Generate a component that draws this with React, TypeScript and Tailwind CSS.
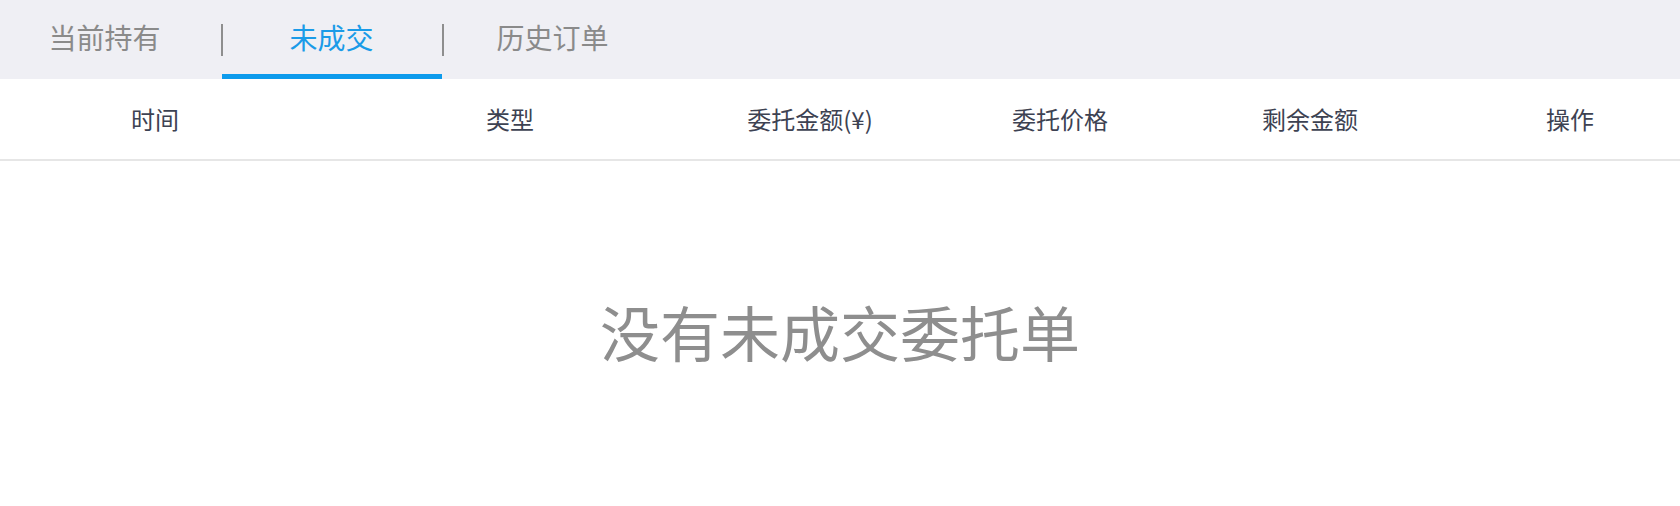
export default function App() {
  const tabs = [
    { label: "当前持有", active: false },
    { label: "未成交", active: true },
    { label: "历史订单", active: false },
  ];

  const columns = [
    { label: "时间", className: "w-[310px]" },
    { label: "类型", className: "w-[400px]" },
    { label: "委托金额(¥)", className: "w-[200px]" },
    { label: "委托价格", className: "w-[300px]" },
    { label: "剩余金额", className: "w-[200px]" },
    { label: "操作", className: "flex-1 pl-[50px]" },
  ];

  return (
    <main
      className="h-[506px] w-full bg-white"
      style={{ fontFamily: '"Noto Sans CJK SC", "Noto Sans", sans-serif' }}
    >
      <nav className="flex h-[79px] items-stretch bg-[#efeff4]">
        {tabs.map((tab, i) => (
          <div
            key={tab.label}
            className={
              i === 0
                ? "flex w-[221px] items-center justify-center pr-[12px]"
                : "flex w-[221px] items-center justify-center"
            }
          >
            <div className="relative flex h-full w-full items-center justify-center">
              {i > 0 && (
                <span className="absolute left-0 top-[24px] h-[32px] w-[2px] bg-[#8e8e8e]" />
              )}
              <span
                className={
                  tab.active
                    ? "pb-[6px] text-[28px] text-[#1a9be8]"
                    : "pb-[6px] text-[28px] text-[#8a8a8a]"
                }
              >
                {tab.label}
              </span>
              {tab.active && (
                <span className="absolute bottom-0 left-[1px] right-0 h-[5px] bg-[#0d9bec]" />
              )}
            </div>
          </div>
        ))}
      </nav>

      <div className="flex h-[82px] items-center border-b-2 border-[#e6e6e6]">
        {columns.map((col) => (
          <div
            key={col.label}
            className={`${col.className} text-center text-[24px] text-[#3d4252]`}
          >
            {col.label}
          </div>
        ))}
      </div>

      <div className="flex h-[345px] items-center justify-center pb-[6px]">
        <p className="text-[60px] text-[#8e8e8e]">没有未成交委托单</p>
      </div>
    </main>
  );
}
